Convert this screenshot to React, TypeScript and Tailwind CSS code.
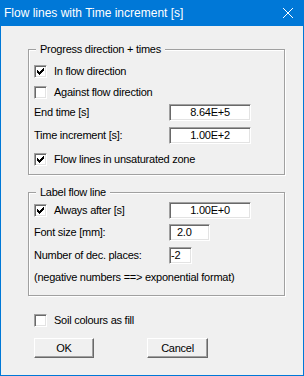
import type { ReactNode } from "react";

const sans = "font-['Liberation_Sans',Arial,sans-serif]";

function Check({ checked }: { checked?: boolean }) {
  return (
    <div className="relative h-[13px] w-[13px] shrink-0 border border-t-[#a0a0a0] border-l-[#a0a0a0] border-r-white border-b-white bg-white shadow-[inset_1px_1px_0_#696969,inset_-1px_-1px_0_#e3e3e3]">
      {checked && (
        <svg
          className="absolute left-[2px] top-[2px]"
          width="7"
          height="7"
          viewBox="0 0 7 7"
          shapeRendering="crispEdges"
        >
          <rect x="0" y="2" width="1" height="3" fill="#000" />
          <rect x="1" y="3" width="1" height="3" fill="#000" />
          <rect x="2" y="4" width="1" height="3" fill="#000" />
          <rect x="3" y="3" width="1" height="3" fill="#000" />
          <rect x="4" y="2" width="1" height="3" fill="#000" />
          <rect x="5" y="1" width="1" height="3" fill="#000" />
          <rect x="6" y="0" width="1" height="3" fill="#000" />
        </svg>
      )}
    </div>
  );
}

function CheckRow({ checked, label, className = "" }: { checked?: boolean; label: string; className?: string }) {
  return (
    <div className={`flex h-[13px] items-center ${className}`}>
      <Check checked={checked} />
      <span className="ml-[7px] leading-[13px]">{label}</span>
    </div>
  );
}

function Field({ value, className }: { value: string; className: string }) {
  return (
    <div
      className={`h-[17px] shrink-0 border border-t-[#a0a0a0] border-l-[#a0a0a0] border-r-white border-b-white bg-white leading-[15px] shadow-[inset_1px_1px_0_#696969,inset_-1px_-1px_0_#e3e3e3] ${className}`}
    >
      {value}
    </div>
  );
}

function Group({ title, className = "", children }: { title: string; className?: string; children: ReactNode }) {
  return (
    <div
      className={`relative ml-[27px] w-[257px] border border-[#a0a0a0] pl-[5px] shadow-[inset_1px_1px_0_#fff,1px_1px_0_#fff] ${className}`}
    >
      <span className="absolute left-[7px] top-[-8px] h-[14px] bg-[#f0f0f0] px-[4px] leading-[14px]">{title}</span>
      {children}
    </div>
  );
}

export default function App() {
  return (
    <div className={`flex h-[376px] w-[304px] flex-col bg-[#0078d7] ${sans} text-[11px] tracking-[-0.25px] text-black`}>
      <div className="flex h-[26px] shrink-0 items-center justify-between pl-[4px] pr-[11px]">
        <span className="text-[12px] tracking-normal text-white">Flow lines with Time increment [s]</span>
        <svg width="10" height="10" viewBox="0 0 10 10">
          <path d="M0 0L10 10M10 0L0 10" stroke="#fff" strokeWidth="1" />
        </svg>
      </div>

      <div className="mx-px mb-px flex flex-1 flex-col bg-[#f0f0f0]">
        <Group title="Progress direction + times" className="mt-[23px] pt-[15px] pb-[8px]">
          <CheckRow checked label="In flow direction" />
          <CheckRow label="Against flow direction" className="mt-[8px]" />
          <div className="mt-[5px] flex h-[17px] items-center">
            <span className="w-[135px] shrink-0">End time [s]</span>
            <Field value="8.64E+5" className="w-[82px] text-center" />
          </div>
          <div className="mt-[6px] flex h-[17px] items-center">
            <span className="w-[135px] shrink-0">Time increment [s]:</span>
            <Field value="1.00E+2" className="w-[82px] text-center" />
          </div>
          <CheckRow checked label="Flow lines in unsaturated zone" className="mt-[9px]" />
        </Group>

        <Group title="Label flow line" className="mt-[17px] pt-[9px] pb-[11px]">
          <div className="flex h-[17px] items-center">
            <CheckRow checked label="Always after [s]" className="w-[135px] shrink-0" />
            <Field value="1.00E+0" className="w-[82px] text-center" />
          </div>
          <div className="mt-[5px] flex h-[17px] items-center">
            <span className="w-[135px] shrink-0">Font size [mm]:</span>
            <Field value="2.0" className="w-[41px] pl-[7px]" />
          </div>
          <div className="mt-[6px] flex h-[17px] items-center">
            <span className="w-[135px] shrink-0">Number of dec. places:</span>
            <Field value="-2" className="w-[23px] pl-[1px]" />
          </div>
          <div className="mt-[6px] h-[14px] leading-[14px]">(negative numbers ==&gt; exponential format)</div>
        </Group>

        <CheckRow label="Soil colours as fill" className="ml-[33px] mt-[18px]" />

        <div className="ml-[33px] mt-[11px] flex gap-[53px]">
          <button className="h-[20px] w-[60px] border border-t-white border-l-white border-r-[#696969] border-b-[#696969] bg-[#f0f0f0] leading-[18px] shadow-[inset_-1px_-1px_0_#a0a0a0]">
            OK
          </button>
          <button className="h-[20px] w-[61px] border border-t-white border-l-white border-r-[#696969] border-b-[#696969] bg-[#f0f0f0] leading-[18px] shadow-[inset_-1px_-1px_0_#a0a0a0]">
            Cancel
          </button>
        </div>
      </div>
    </div>
  );
}
